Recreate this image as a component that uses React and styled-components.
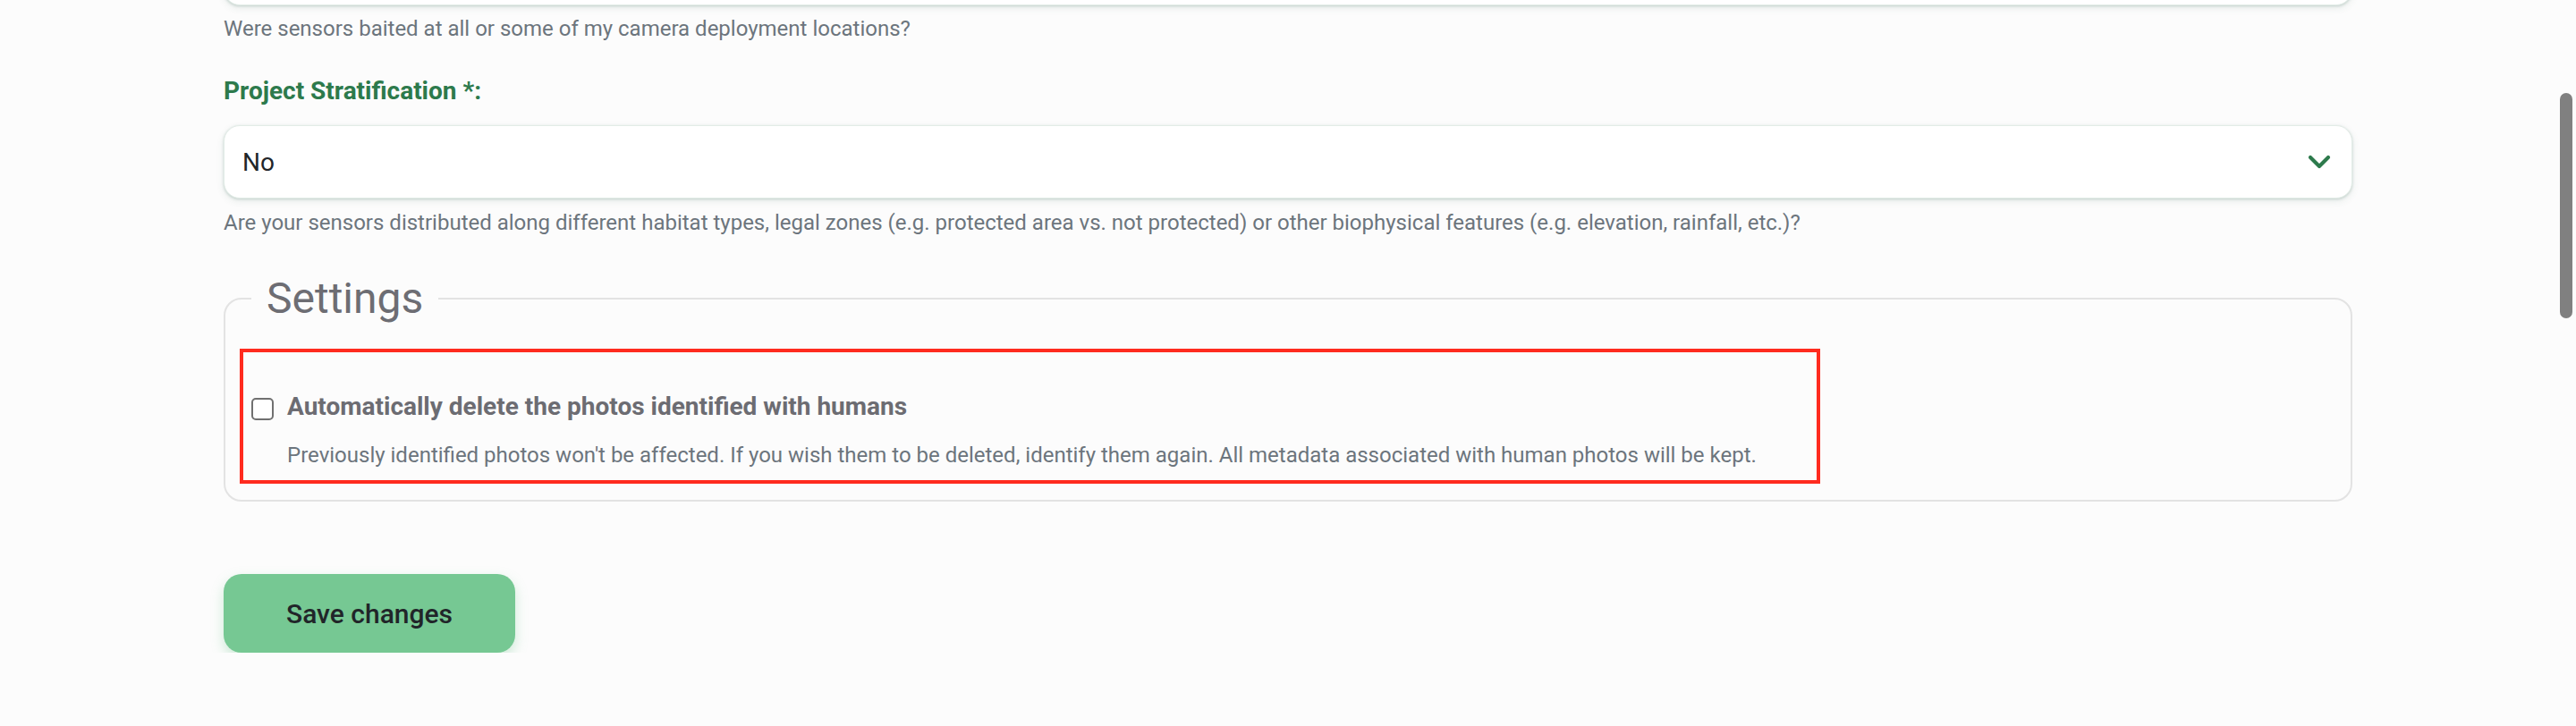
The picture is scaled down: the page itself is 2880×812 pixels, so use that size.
import styled, { createGlobalStyle } from "styled-components";

const GlobalStyle = createGlobalStyle`
  html, body {
    margin: 0;
    padding: 0;
    overflow: hidden;
    background: #fcfcfc;
  }
  body {
    font-family: Roboto, "Liberation Sans", Arial, sans-serif;
  }
`;

const Page = styled.div`
  width: 2380px;
  padding-left: 250px;
  display: flex;
  flex-direction: column;
`;

const SelectBox = styled.div`
  box-sizing: border-box;
  height: 82px;
  background: #fff;
  border: 1px solid #e2ece7;
  border-radius: 18px;
  box-shadow: 0 1px 3px rgba(50, 100, 80, 0.22), 0 3px 8px rgba(50, 100, 80, 0.1);
  display: flex;
  align-items: center;
  justify-content: space-between;
  padding: 0 23px 0 20px;
  font-size: 28px;
  color: #212529;
`;

const PrevInput = styled(SelectBox)`
  margin-top: -76px;
`;

const Help = styled.p`
  margin: ${(p) => p.$top}px 0 0;
  font-size: 24px;
  line-height: 36px;
  color: #6c757d;
`;

const Label = styled.label`
  margin-top: 31px;
  margin-bottom: 17px;
  font-size: 28px;
  line-height: 42px;
  font-weight: 700;
  color: #2d7a4c;
`;

const Fieldset = styled.fieldset`
  margin: 38px 0 0;
  padding: 0 16px 18px 16px;
  border: 2px solid #e3e3e3;
  border-radius: 20px;
  min-width: 0;
`;

const Legend = styled.legend`
  margin-left: 13px;
  padding: 0 17px;
  font-size: 48px;
  line-height: 58px;
  font-weight: 400;
  color: #6d6d73;
`;

const SettingItem = styled.div`
  width: 1767px;
  box-sizing: border-box;
  margin-top: 27px;
  border: 4px solid #ff2b1f;
  padding: 40px 0 10px 9px;
`;

const CheckRow = styled.label`
  display: flex;
  align-items: center;
  gap: 15px;
  font-size: 28px;
  line-height: 42px;
  font-weight: 700;
  color: #6c6c72;
`;

const Box = styled.span`
  width: 25px;
  height: 25px;
  margin-top: 4px;
  box-sizing: border-box;
  border: 2px solid #707070;
  border-radius: 5px;
  background: #fff;
  flex: none;
`;

const Desc = styled.p`
  margin: 15px 0 0 40px;
  font-size: 24px;
  line-height: 36px;
  color: #6c757d;
`;

const SaveButton = styled.button`
  margin-top: 81px;
  width: 326px;
  height: 88px;
  border: none;
  border-radius: 20px;
  background: #76c893;
  box-shadow: 0 6px 14px rgba(118, 200, 147, 0.35);
  font-family: Roboto, "Liberation Sans", Arial, sans-serif;
  font-size: 30px;
  font-weight: 500;
  color: #212529;
  cursor: pointer;
`;

const ScrollThumb = styled.div`
  position: fixed;
  top: 104px;
  right: 4px;
  width: 14px;
  height: 252px;
  border-radius: 7px;
  background: #808080;
`;

const Chevron = () => (
  <svg width="26" height="16" viewBox="0 0 26 16" fill="none">
    <polyline
      points="3,3 13,13 23,3"
      stroke="#2d7a4c"
      strokeWidth="4.2"
      strokeLinecap="round"
      strokeLinejoin="round"
    />
  </svg>
);

const App = () => {
  return (
    <>
      <GlobalStyle />
      <Page>
        <PrevInput />
        <Help $top={8}>Were sensors baited at all or some of my camera deployment locations?</Help>
        <Label>Project Stratification *:</Label>
        <SelectBox>
          <span>No</span>
          <Chevron />
        </SelectBox>
        <Help $top={9}>
          Are your sensors distributed along different habitat types, legal zones (e.g. protected area vs. not
          protected) or other biophysical features (e.g. elevation, rainfall, etc.)?
        </Help>
        <Fieldset>
          <Legend>Settings</Legend>
          <SettingItem>
            <CheckRow>
              <Box />
              Automatically delete the photos identified with humans
            </CheckRow>
            <Desc>
              Previously identified photos won't be affected. If you wish them to be deleted, identify them again.
              All metadata associated with human photos will be kept.
            </Desc>
          </SettingItem>
        </Fieldset>
        <div>
          <SaveButton>Save changes</SaveButton>
        </div>
      </Page>
      <ScrollThumb />
    </>
  );
};

export default App;
